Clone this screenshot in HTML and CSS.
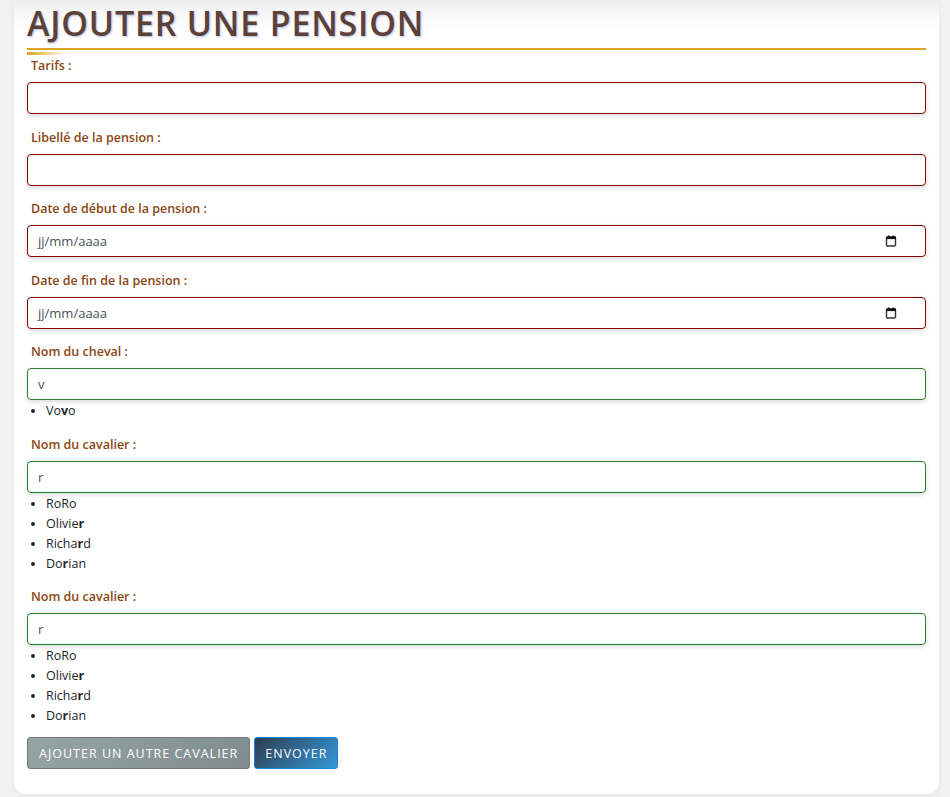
FILE: index.html
```html
<!DOCTYPE html>
<html lang="fr">
<head>
<meta charset="utf-8">
<title>Ajouter une pension</title>
<link rel="stylesheet" href="styles.css">
</head>
<body>
<div class="page">
  <div class="card">
    <h1 class="title">AJOUTER UNE PENSION</h1>
    <div class="rule"></div>
    <div class="rule-accent"></div>

    <div class="group">
      <label class="label">Tarifs :</label>
      <input class="field invalid" type="text">
    </div>

    <div class="group">
      <label class="label">Libellé de la pension :</label>
      <input class="field invalid" type="text">
    </div>

    <div class="group">
      <label class="label">Date de début de la pension :</label>
      <div class="field invalid date">
        <span>jj/mm/aaaa</span>
        <svg class="cal" width="12" height="12" viewBox="0 0 12 12"><rect x="1.5" y="2" width="9" height="9" rx="1" fill="none" stroke="#333" stroke-width="1.4"/><rect x="1" y="1.5" width="10" height="2.6" fill="#111"/><rect x="3" y="0.5" width="1.4" height="2" fill="#111"/><rect x="7.6" y="0.5" width="1.4" height="2" fill="#111"/></svg>
      </div>
    </div>

    <div class="group">
      <label class="label">Date de fin de la pension :</label>
      <div class="field invalid date">
        <span>jj/mm/aaaa</span>
        <svg class="cal" width="12" height="12" viewBox="0 0 12 12"><rect x="1.5" y="2" width="9" height="9" rx="1" fill="none" stroke="#333" stroke-width="1.4"/><rect x="1" y="1.5" width="10" height="2.6" fill="#111"/><rect x="3" y="0.5" width="1.4" height="2" fill="#111"/><rect x="7.6" y="0.5" width="1.4" height="2" fill="#111"/></svg>
      </div>
    </div>

    <div class="group">
      <label class="label">Nom du cheval :</label>
      <input class="field valid" type="text" value="v">
      <ul class="suggest">
        <li>Vo<b>v</b>o</li>
      </ul>
    </div>

    <div class="group">
      <label class="label">Nom du cavalier :</label>
      <input class="field valid" type="text" value="r">
      <ul class="suggest">
        <li>RoRo</li>
        <li>Olivie<b>r</b></li>
        <li>Richa<b>r</b>d</li>
        <li>Do<b>r</b>ian</li>
      </ul>
    </div>

    <div class="group">
      <label class="label">Nom du cavalier :</label>
      <input class="field valid" type="text" value="r">
      <ul class="suggest">
        <li>RoRo</li>
        <li>Olivie<b>r</b></li>
        <li>Richa<b>r</b>d</li>
        <li>Do<b>r</b>ian</li>
      </ul>
    </div>

    <div class="actions">
      <button class="btn btn-gray" type="button">Ajouter un autre cavalier</button>
      <button class="btn btn-blue" type="submit">Envoyer</button>
    </div>
  </div>
</div>
</body>
</html>
```
FILE: styles.css
```css
html, body {
  margin: 0;
  padding: 0;
  background: #f2f2f2;
  font-family: "Open Sans", "Noto Sans", sans-serif;
}

.page {
  padding: 0 11px 3px 14px;
}

.card {
  background: linear-gradient(#efefef 0px, #ffffff 28px);
  border-radius: 0 0 12px 12px;
  box-shadow: 0 2px 6px rgba(0, 0, 0, 0.06);
  padding: 0 13px 25px 13px;
}

.title {
  margin: 0;
  padding-top: 1px;
  font-size: 34px;
  line-height: 44px;
  font-weight: 600;
  letter-spacing: 0.8px;
  color: #5d4037;
  text-shadow: 1px 1px 2px rgba(80, 110, 180, 0.45);
}

.rule {
  margin-top: 3px;
  height: 2px;
  background: #daa520;
}

.rule-accent {
  margin-top: 2px;
  width: 40px;
  height: 3px;
  background: linear-gradient(to right, #daa520, rgba(218, 165, 32, 0));
}

.group {
  margin-top: 2px;
  margin-bottom: 14.5px;
}

.label {
  display: block;
  padding-left: 4px;
  font-size: 12.5px;
  line-height: 17px;
  font-weight: 600;
  color: #8b4513;
  margin-bottom: 8px;
}

.field {
  display: block;
  box-sizing: border-box;
  width: 100%;
  height: 32px;
  margin: 0;
  padding: 0 10px;
  border: 1px solid #8b0000;
  border-radius: 4px;
  background: #fff;
  box-shadow: 0 2px 5px rgba(0, 0, 0, 0.14);
  font-family: "Open Sans", "Noto Sans", sans-serif;
  font-size: 13px;
  color: #495057;
  outline: none;
}

.field.valid {
  border-color: #2e7d32;
}

.date {
  display: flex;
  align-items: center;
  justify-content: space-between;
  padding-right: 28px;
}

.cal {
  display: block;
}

.suggest {
  margin: 1px 0 0 0;
  padding-left: 19px;
  font-size: 12.5px;
  line-height: 20px;
  color: #212529;
}

.suggest b {
  font-weight: 700;
}

.actions {
  display: flex;
  gap: 4px;
  margin-top: -3.5px;
}

.btn {
  height: 32px;
  box-sizing: border-box;
  padding: 0 11px;
  border-radius: 3px;
  font-family: "Open Sans", "Noto Sans", sans-serif;
  font-size: 12.5px;
  font-weight: 500;
  letter-spacing: 1px;
  text-transform: uppercase;
  color: #fff;
  cursor: pointer;
}

.btn-gray {
  border: 1px solid #6f7a7b;
  background: linear-gradient(135deg, #95a5a6, #7f8c8d);
}

.btn-blue {
  padding: 0 10px;
  border: 1px solid #1e7fe0;
  background: linear-gradient(135deg, #2c3e50, #3498db);
}
```
